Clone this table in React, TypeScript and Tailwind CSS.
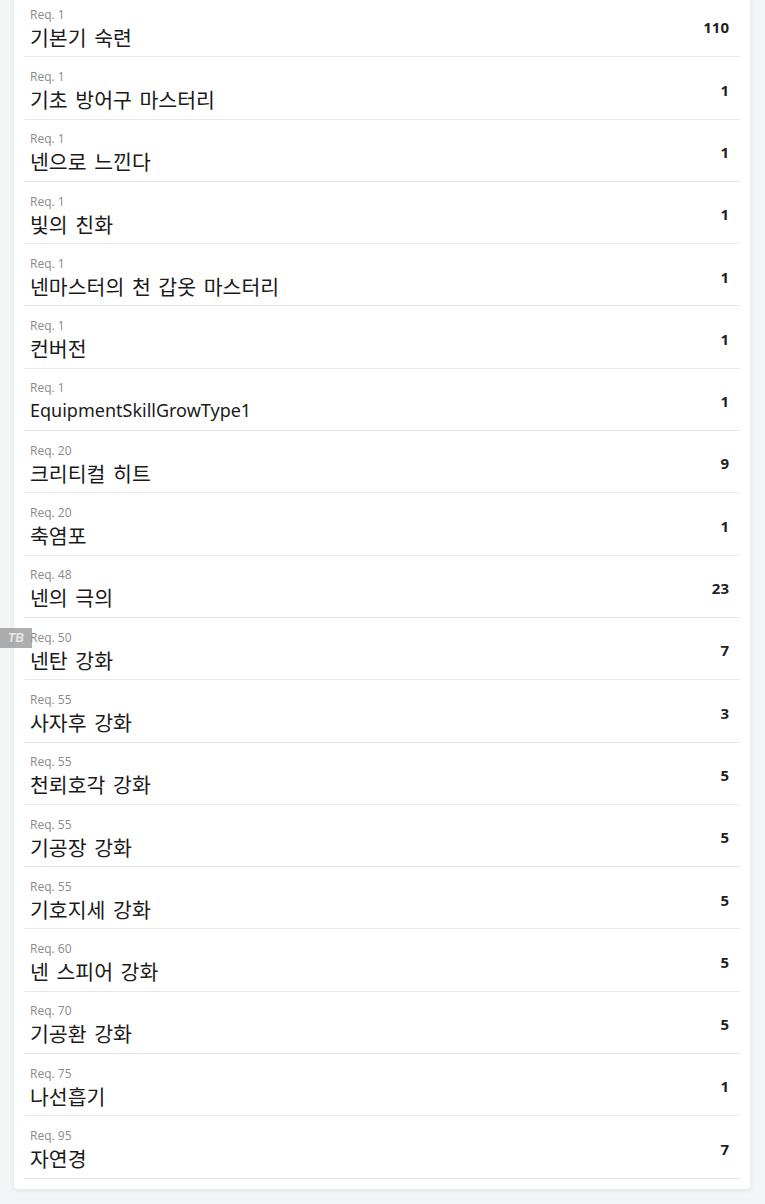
import React from 'react';

type Skill = { req: number; name: string; level: number };

const skills: Skill[] = [
  { req: 1, name: '기본기 숙련', level: 110 },
  { req: 1, name: '기초 방어구 마스터리', level: 1 },
  { req: 1, name: '넨으로 느낀다', level: 1 },
  { req: 1, name: '빛의 친화', level: 1 },
  { req: 1, name: '넨마스터의 천 갑옷 마스터리', level: 1 },
  { req: 1, name: '컨버전', level: 1 },
  { req: 1, name: 'EquipmentSkillGrowType1', level: 1 },
  { req: 20, name: '크리티컬 히트', level: 9 },
  { req: 20, name: '축염포', level: 1 },
  { req: 48, name: '넨의 극의', level: 23 },
  { req: 50, name: '넨탄 강화', level: 7 },
  { req: 55, name: '사자후 강화', level: 3 },
  { req: 55, name: '천뢰호각 강화', level: 5 },
  { req: 55, name: '기공장 강화', level: 5 },
  { req: 55, name: '기호지세 강화', level: 5 },
  { req: 60, name: '넨 스피어 강화', level: 5 },
  { req: 70, name: '기공환 강화', level: 5 },
  { req: 75, name: '나선흡기', level: 1 },
  { req: 95, name: '자연경', level: 7 },
];

// ascii names render in a latin face, korean ones in the CJK face
const isLatin = (s: string) => /^[\x00-\x7f]+$/.test(s);

const SkillRow: React.FC<{ skill: Skill }> = ({ skill }) => (
  <li className="flex h-[62.3px] items-center justify-between border-b border-[#e6e7e9] px-1.5">
    <div className="flex flex-col pt-[5px]">
      <span className="text-[12px] leading-[16px] text-[#8a8a8a] font-['Open_Sans','Noto_Sans',sans-serif]">
        Req. {skill.req}
      </span>
      {isLatin(skill.name) ? (
        <span className="mt-[1px] text-[18px] leading-[26px] text-[#1a1a1a] font-['Noto_Sans',sans-serif]">
          {skill.name}
        </span>
      ) : (
        <span className="mt-[1px] text-[20.5px] leading-[26px] text-[#1a1a1a] [word-spacing:3px] font-['Noto_Sans_CJK_KR',sans-serif]">
          {skill.name}
        </span>
      )}
    </div>
    <span className="mt-[4px] pr-[5px] text-[15px] font-bold text-[#1f1f1f] font-['Noto_Sans',sans-serif]">
      {skill.level}
    </span>
  </li>
);

const App: React.FC = () => {
  return (
    <main className="relative flow-root min-h-screen bg-[#f4f5f7] pl-[14px] pr-[15px] pb-[15px]">
      <section className="-mt-[15px] rounded-sm bg-white px-2.5 pt-2.5 pb-[10px] shadow-[0_1px_6px_rgba(0,0,0,0.08)]">
        <ul>
          {skills.map((s, i) => (
            <SkillRow key={i} skill={s} />
          ))}
        </ul>
      </section>
      <div className="absolute left-0 top-[628px] flex h-[20px] w-[32px] items-center justify-center bg-[#9a9a9a]/80 text-[12px] font-bold italic text-[#e8e8e8] font-['Liberation_Sans',sans-serif]">
        TB
      </div>
    </main>
  );
};

export default App;
